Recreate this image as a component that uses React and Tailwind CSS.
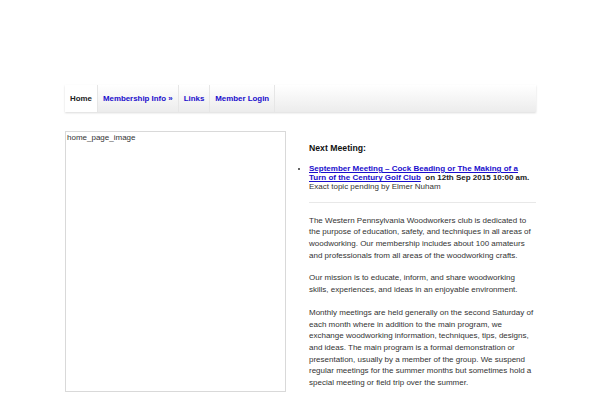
import React from 'react';

const navItems = [
    { label: 'Home', active: true },
    { label: 'Membership Info »' },
    { label: 'Links' },
    { label: 'Member Login' },
];

// line breaks as they fall on the original page
const paragraphs = [
    [
        'The Western Pennsylvania Woodworkers club is dedicated to',
        'the purpose of education, safety, and techniques in all areas of',
        'woodworking. Our membership includes about 100 amateurs',
        'and professionals from all areas of the woodworking crafts.',
    ],
    [
        'Our mission is to educate, inform, and share woodworking',
        'skills, experiences, and ideas in an enjoyable environment.',
    ],
    [
        'Monthly meetings are held generally on the second Saturday of',
        'each month where in addition to the main program, we',
        'exchange woodworking information, techniques, tips, designs,',
        'and ideas. The main program is a formal demonstration or',
        'presentation, usually by a member of the group. We suspend',
        'regular meetings for the summer months but sometimes hold a',
        'special meeting or field trip over the summer.',
    ],
];

const App = () => {
    return (
        <div className="w-[600px] h-[400px] overflow-hidden bg-white font-['Liberation_Sans',Arial,sans-serif] text-[#222]">
            <div className="pt-[85px] pl-[65px] w-[536px]">
                {/* nav */}
                <div className="flex h-[27px] bg-gradient-to-b from-white to-[#ececec] shadow-[0_1px_2px_rgba(0,0,0,0.15)]">
                    {navItems.map((item) => (
                        <div
                            key={item.label}
                            className={`flex items-center px-[5px] border-r border-[#e6e6e6] text-[7.9px] font-bold ${item.active ? 'bg-white text-[#222]' : 'text-[#1a0dcc]'}`}
                        >
                            {item.label}
                        </div>
                    ))}
                </div>

                <div className="flex mt-[19px]">
                    {/* image placeholder */}
                    <div className="w-[221px] h-[261px] border border-[#d9d9d9] shrink-0">
                        <p className="text-[8px] leading-[10px] pl-px pt-px text-[#333]">home_page_image</p>
                    </div>

                    {/* right column */}
                    <div className="ml-[23px] w-[227px]">
                        <h3 className="text-[8.7px] font-bold mt-[11px] leading-[12px] text-[#111]">Next Meeting:</h3>
                        <ul className="mt-[10px] list-disc pl-0 text-[8px] leading-[9.2px]">
                            <li className="marker:text-[#333]">
                                <a href="#" className="font-bold text-[#1a0dcc] underline">
                                    September Meeting – Cock Beading or The Making of a Turn of the Century Golf Club
                                </a>
                                <span className="font-bold"> &nbsp;on 12th Sep 2015 10:00 am.</span>
                                <br />
                                <span className="text-[#333]">Exact topic pending by Elmer Nuham</span>
                            </li>
                        </ul>
                        <hr className="mt-[10px] border-0 border-t border-[#e8e8e8]" />
                        <div className="mt-[12px] text-[8px] leading-[11.7px] text-[#333] space-y-[11px] whitespace-nowrap">
                            {paragraphs.map((lines, i) => (
                                <p key={i}>
                                    {lines.map((line, j) => (
                                        <React.Fragment key={j}>
                                            {line}
                                            {j < lines.length - 1 && <br />}
                                        </React.Fragment>
                                    ))}
                                </p>
                            ))}
                        </div>
                    </div>
                </div>
            </div>
        </div>
    );
};

export default App;
